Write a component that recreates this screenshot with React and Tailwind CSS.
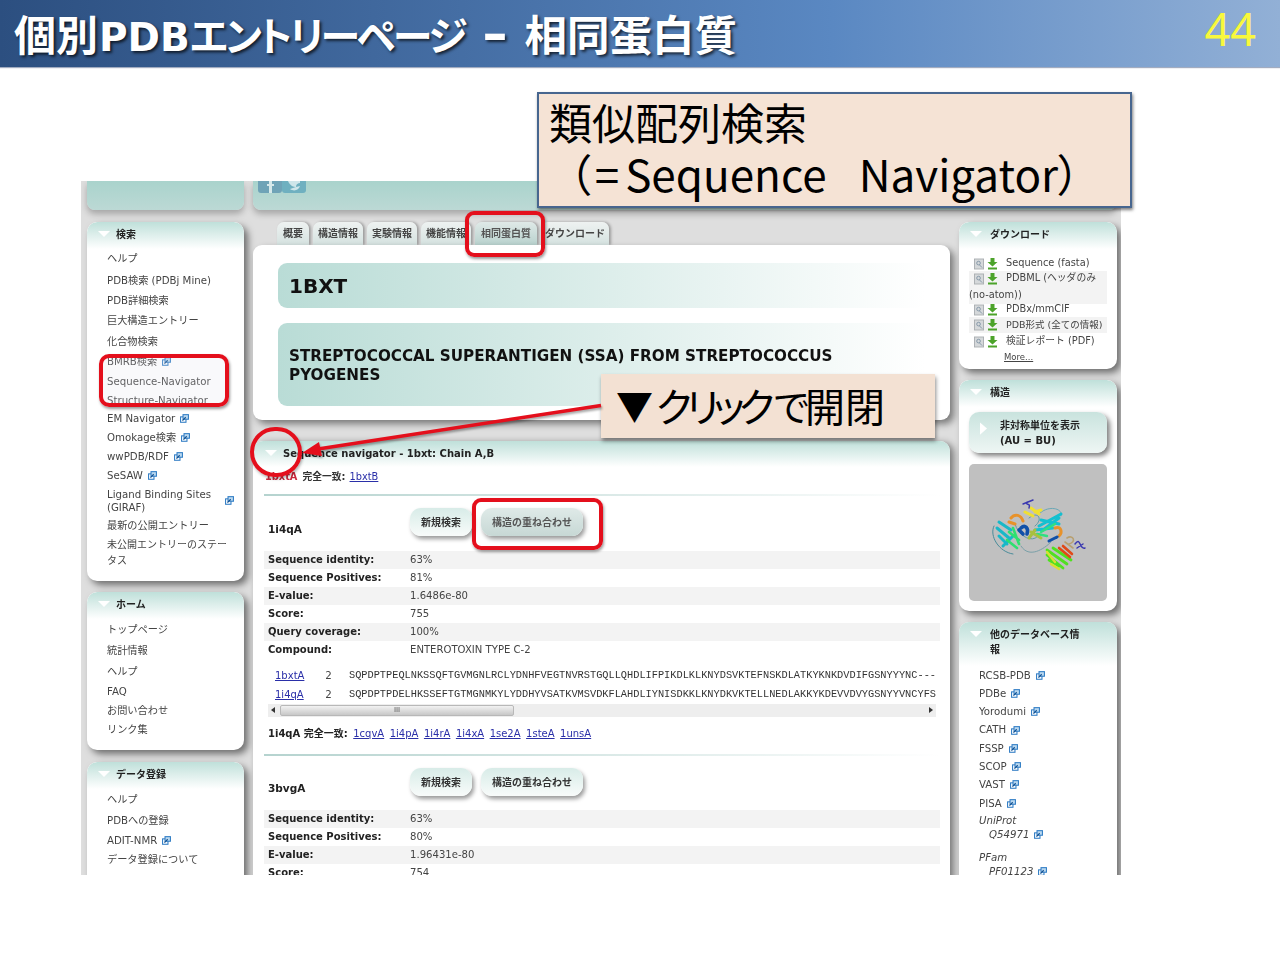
const Ext = () => (
  <svg viewBox="0 0 11 11" className="inline-block w-[9px] h-[9px] ml-[5px] align-[-1px] shrink-0">
    <rect x="0.7" y="3.5" width="6.6" height="6.6" fill="#fff" stroke="#2f7cc4" strokeWidth="1.3" />
    <rect x="3.7" y="0.8" width="6.6" height="5.6" fill="#bcd9f0" stroke="#2f7cc4" strokeWidth="1.3" />
    <path d="M3 8 L7 4" stroke="#12508f" strokeWidth="1.4" />
  </svg>
);
const Tri = ({ c = "" }) => (
  <svg viewBox="0 0 12 6" className={"w-[12px] h-[6px] shrink-0 " + c}>
    <path d="M0 0 H12 L6 6 Z" fill="#fff" />
  </svg>
);
const DL = () => (
  <span className="inline-flex items-center gap-[3px] shrink-0">
    <svg viewBox="0 0 11 12" className="w-[10px] h-[12px]">
      <rect x="0.5" y="0.5" width="10" height="11" fill="#d5d8da" stroke="#a9adb0" />
      <circle cx="5" cy="5" r="2" fill="none" stroke="#7f93a5" />
      <path d="M6 7 L9 10" stroke="#7f93a5" />
    </svg>
    <svg viewBox="0 0 11 12" className="w-[11px] h-[12px]">
      <path d="M3.5 0 H7.5 V4 H10.5 L5.5 8.5 L0.5 4 H3.5 Z" fill="#4ca32a" />
      <rect x="1" y="9.5" width="9" height="2" fill="#4ca32a" />
    </svg>
  </span>
);

const Panel = ({ title, children, cls = "", gap = "gap-[6px]" }) => (
  <div className={"bg-white rounded-[10px] shadow-[4px_4px_7px_rgba(0,0,0,0.5)] overflow-hidden shrink-0 " + cls}>
    <div className={"h-[27px] pb-[3px] rounded-t-[10px] bg-gradient-to-b from-[#bfe0da] to-white flex items-center pl-[11px] " + gap}>
      <Tri />
      <span className="font-bold text-[10px] text-[#222]">{title}</span>
    </div>
    {children}
  </div>
);

const Row = ({ h, children, ext }) => (
  <div className={"flex items-center pl-[20px] pr-[10px] text-[10.2px] text-[#444] " + h}>
    <span>{children}{ext && <Ext />}</span>
  </div>
);

const search = [
  ["h-[21px] pb-[1px]", "ヘルプ"],
  ["h-[21px]", "PDB検索 (PDBj Mine)"],
  ["h-[20px]", "PDB詳細検索"],
  ["h-[20px]", "巨大構造エントリー"],
  ["h-[21px]", "化合物検索"],
  ["h-[20px]", "BMRB検索", 1],
  ["h-[20px]", "Sequence-Navigator"],
  ["h-[18px]", "Structure-Navigator"],
  ["h-[18px]", "EM Navigator", 1],
  ["h-[19px]", "Omokage検索", 1],
  ["h-[19px]", "wwPDB/RDF", 1],
  ["h-[19px]", "SeSAW", 1],
];
const home = [
  ["h-[22px]", "トップページ"],
  ["h-[20px]", "統計情報"],
  ["h-[21px]", "ヘルプ"],
  ["h-[19px]", "FAQ"],
  ["h-[19px]", "お問い合わせ"],
  ["h-[20px]", "リンク集"],
];
const dep = [
  ["h-[21px]", "ヘルプ"],
  ["h-[21px]", "PDBへの登録"],
  ["h-[19px]", "ADIT-NMR", 1],
  ["h-[19px]", "データ登録について"],
];
const dbs = ["RCSB-PDB", "PDBe", "Yorodumi", "CATH", "FSSP", "SCOP", "VAST", "PISA"];

const Tab = ({ w, children, active }) => (
  <div className={"h-[23px] rounded-t-[7px] flex items-center justify-center text-[10px] font-bold shrink-0 shadow-[2px_0_3px_rgba(0,0,0,0.3)] " + w + " " + (active ? "bg-gradient-to-b from-[#dfe9e7] to-[#b9d2ce] text-[#555]" : "bg-gradient-to-b from-[#eef2f1] to-[#d5e2e0] text-[#444]")}>
    {children}
  </div>
);

const Btn = ({ w, children, active }) => (
  <div className={"h-[28px] rounded-[11px] flex items-center justify-center text-[10px] font-bold shadow-[2px_3px_4px_rgba(0,0,0,0.4)] bg-gradient-to-b " + w + " " + (active ? "from-[#dfeae8] to-[#c7d8d5] text-[#555]" : "from-[#d8ece8] to-[#f8fbfa] text-[#333]")}>
    {children}
  </div>
);

const Divider = ({ cls = "" }) => (
  <div className={"h-[2px] bg-gradient-to-r from-[#b5d3cf] to-white " + cls} />
);

const Stat = ({ k, v, shade }) => (
  <div className={"h-[18px] flex items-center pl-[4px] text-[10px] " + (shade ? "bg-[#f3f3f3]" : "")}>
    <span className="w-[142px] font-bold text-[#222] shrink-0">{k}</span>
    <span className="text-[#444] text-[10.1px]">{v}</span>
  </div>
);

const Lnk = ({ children }) => <span className="text-[#2a2fa8] underline">{children}</span>;

const Hit = ({ name, active, mt, nameMt }) => (
  <div className={"flex items-center pl-[4px] " + mt}>
    <span className={"w-[142px] font-bold text-[10.5px] text-[#222] " + nameMt}>{name}</span>
    <div className="flex gap-[9px]">
      <Btn w="w-[62px]">新規検索</Btn>
      <Btn w="w-[102px]" active={active}>構造の重ね合わせ</Btn>
    </div>
  </div>
);

const Protein = () => (
  <svg viewBox="0 0 138 137" className="w-full h-full">
    <g fill="none" strokeLinecap="round" strokeLinejoin="round">
      <path d="M25 62 C20 72 30 88 44 90" stroke="#4a8c9a" strokeWidth="1" />
      <path d="M52 82 C60 95 75 85 82 78" stroke="#7aa0a8" strokeWidth="1" />
      <path d="M70 50 C80 40 95 45 92 52" stroke="#6aa7b5" strokeWidth="1" />
      <path d="M46 60 C50 74 66 80 70 70 M60 54 C70 46 74 56 66 62" stroke="#5f9aa8" strokeWidth="1" />
      <path d="M30 58 L42 66 M28 64 L40 74 M30 72 L38 80 M34 82 L44 72" stroke="#18b8c8" strokeWidth="3" />
      <path d="M40 68 L50 76 M44 64 L50 80 M38 76 L48 84" stroke="#2ee070" strokeWidth="2.6" />
      <path d="M70 62 L92 50 M72 56 L90 60 M66 66 L84 64 M74 66 L90 54" stroke="#14c0d0" strokeWidth="3" />
      <path d="M72 68 L86 60 M68 70 L78 72" stroke="#30e080" strokeWidth="2.4" />
      <path d="M42 54 C46 49 52 51 54 57 M40 58 L46 60" stroke="#e8922a" strokeWidth="3" />
      <path d="M86 64 C92 62 94 68 90 72" stroke="#e8922a" strokeWidth="3" />
      <path d="M56 48 L64 52 M62 44 L70 50 M66 48 L72 46" stroke="#f0e030" strokeWidth="3" />
      <path d="M52 64 C56 60 60 64 58 70 M50 66 L54 70" stroke="#1050a8" strokeWidth="3.6" />
      <path d="M62 68 L72 74 M60 74 L66 66" stroke="#a8c040" strokeWidth="3" />
      <path d="M58 38 C56 42 62 38 60 44 M54 40 L64 36" stroke="#3a38b0" strokeWidth="1.5" />
      <path d="M80 77 L88 73" stroke="#1050a8" strokeWidth="3" />
      <path d="M78 86 L98 100 M78 91 L94 104 M84 84 L102 96 M80 96 L90 102" stroke="#50e020" strokeWidth="2.8" />
      <path d="M90 84 L101 93 M94 82 L103 90" stroke="#e04a18" strokeWidth="2.6" />
      <path d="M78 88 L86 98 M82 100 L90 105" stroke="#d8e030" strokeWidth="2.4" />
      <path d="M98 74 C104 70 108 78 100 80 M96 78 L104 84" stroke="#b8a070" strokeWidth="1.6" />
      <path d="M106 80 C112 72 110 86 116 84 M108 84 L114 80" stroke="#3a38b0" strokeWidth="1.5" />
    </g>
  </svg>
);

export default function App() {
  return (
    <div className="relative w-[1280px] h-[960px] bg-white overflow-hidden [font-family:'DejaVu_Sans','Noto_Sans_CJK_JP',sans-serif]">
      <header className="h-[67px] bg-gradient-to-r from-[#2c4f80] via-[#5a88c2] via-65% to-[#92b0d6] flex items-center justify-between pl-[14px] pr-[24px] shadow-[0_1px_1px_rgba(70,90,130,0.5)] [font-family:'Noto_Sans_CJK_JP',sans-serif]">
        <h1 className="text-[42px] font-bold text-white leading-none whitespace-pre [text-shadow:2px_2px_3px_rgba(0,0,0,0.7)]">
          <span>個別</span>
          <span className="text-[39px] ml-[1px] [font-family:'DejaVu_Sans',sans-serif]">PDB</span>
          <span className="text-[40px] [font-feature-settings:'palt'] tracking-[-2.9px]">エントリーページ</span>
          <span className="text-[50px] ml-[18px] mr-[17px] [font-family:'DejaVu_Sans',sans-serif] leading-none">–</span>
          <span className="text-[42.5px]">相同蛋白質</span>
        </h1>
        <span className="text-[45px] -mt-[10px] text-[#f8f83c] leading-none [font-family:'Noto_Sans',sans-serif] font-normal">44</span>
      </header>

      <main className="ml-[81px] mt-[114px] w-[1040px] h-[694px] overflow-hidden bg-[#dedede] flex px-[6px] gap-[9px] blur-[0.35px]">
        {/* left */}
        <div className="w-[157px] shrink-0 flex flex-col">
          <div className="h-[29px] shrink-0 rounded-b-[8px] bg-gradient-to-b from-[#a9d3cc] to-[#bcd9d5] shadow-[0_4px_6px_rgba(0,0,0,0.25)]" />
          <Panel title="検索" cls="mt-[12px] pb-[10px]">
            {search.map(([h, t, e], i) => <Row key={i} h={h} ext={e}>{t}</Row>)}
            <div className="h-[31px] flex items-center justify-between pl-[20px] pr-[10px] text-[10.2px] leading-[13px] text-[#444]">
              <span>Ligand Binding Sites<br />(GIRAF)</span><Ext />
            </div>
            <Row h="h-[19px]">最新の公開エントリー</Row>
            <div className="h-[36px] flex items-center pl-[20px] text-[10px] leading-[16px] text-[#444]">
              <span>未公開エントリーのステー<br />タス</span>
            </div>
          </Panel>
          <Panel title="ホーム" cls="mt-[11px] pb-[10px]">
            {home.map(([h, t], i) => <Row key={i} h={h}>{t}</Row>)}
          </Panel>
          <Panel title="データ登録" cls="mt-[12px] pb-[20px]">
            {dep.map(([h, t, e], i) => <Row key={i} h={h} ext={e}>{t}</Row>)}
          </Panel>
        </div>

        {/* center */}
        <div className="w-[697px] shrink-0 flex flex-col">
          <div className="h-[29px] shrink-0 w-[864px] rounded-b-[8px] bg-gradient-to-b from-[#a9d3cc] to-[#bcd9d5] shadow-[0_4px_6px_rgba(0,0,0,0.25)] flex items-start pl-[5px]">
            <svg viewBox="0 0 24 12" className="w-[24px] h-[12px]">
              <path d="M0 0 H24 V9 Q24 12 21 12 H3 Q0 12 0 9 Z" fill="#6fa3b7" />
              <path d="M11 12 V5 H9 V3 H11 V0 H14 V3 H16 V5 H14 V12 Z" fill="#d6e8ea" />
            </svg>
            <svg viewBox="0 0 24 12" className="w-[24px] h-[12px]">
              <path d="M0 0 H24 V9 Q24 12 21 12 H3 Q0 12 0 9 Z" fill="#6fb0c0" />
              <path d="M6 0 C8 5 12 6 14 6 C14 3 16 2 18 2 V0 Z M8 8 C12 11 17 9 18 5 L14 6 Z" fill="#cfe6ea" />
            </svg>
          </div>
          <div className="mt-[12px] flex pl-[24px] gap-[4px] shrink-0">
            <Tab w="w-[32px]">概要</Tab>
            <Tab w="w-[50px]">構造情報</Tab>
            <Tab w="w-[50px]">実験情報</Tab>
            <Tab w="w-[50px]">機能情報</Tab>
            <Tab w="w-[62px]" active>相同蛋白質</Tab>
            <Tab w="w-[68px]">ダウンロード</Tab>
          </div>
          <div className="h-[175px] shrink-0 bg-white rounded-[9px] shadow-[4px_4px_7px_rgba(0,0,0,0.45)] pt-[18px] px-[25px] flex flex-col">
            <div className="h-[45px] rounded-[9px] bg-gradient-to-r from-[#b9dcd6] to-white flex items-center pl-[11px] text-[20px] font-bold text-[#111] leading-none">1BXT</div>
            <div className="mt-[15px] h-[83px] rounded-[9px] bg-gradient-to-r from-[#b9dcd6] to-white flex items-center pl-[11px] pt-[2px] text-[15.2px] font-bold text-[#111] leading-[19px]">
              <span>STREPTOCOCCAL SUPERANTIGEN (SSA) FROM STREPTOCOCCUS<br />PYOGENES</span>
            </div>
          </div>
          <div className="mt-[21px] h-[500px] shrink-0 bg-white rounded-t-[10px] shadow-[4px_2px_7px_rgba(0,0,0,0.45)] overflow-hidden">
            <div className="h-[26px] pb-[2px] bg-gradient-to-b from-[#bfe0da] to-white flex items-center pl-[12px] gap-[6px]">
              <Tri />
              <span className="font-bold text-[10px] text-[#222]">Sequence navigator - 1bxt: Chain A,B</span>
            </div>
            <div className="pl-[12px] pt-[3px] h-[18px] flex items-center text-[9.8px]">
              <span className="font-bold text-[#c8283c]">1bxtA</span>
              <span className="font-bold text-[#333] ml-[5px]">完全一致:</span>
              <span className="ml-[4px]"><Lnk>1bxtB</Lnk></span>
            </div>
            <div className="pl-[11px] pr-[10px]">
              <Divider cls="mt-[9px]" />
              <Hit name="1i4qA" active mt="mt-[11px]" nameMt="mt-[15px]" />
              <div className="mt-[13px]">
                <Stat shade k="Sequence identity:" v="63%" />
                <Stat k="Sequence Positives:" v="81%" />
                <Stat shade k="E-value:" v="1.6486e-80" />
                <Stat k="Score:" v="755" />
                <Stat shade k="Query coverage:" v="100%" />
                <Stat k="Compound:" v="ENTEROTOXIN TYPE C-2" />
              </div>
              <div className="mt-[7px] flex flex-col pl-[11px] text-[10.3px] w-[672px] overflow-hidden">
                <div className="h-[19px] flex items-center whitespace-pre">
                  <span className="w-[51px] text-[10px]"><Lnk>1bxtA</Lnk></span>
                  <span className="w-[24px] text-[#444]">2</span>
                  <span className="[font-family:'Liberation_Mono',monospace] text-[#333]">SQPDPTPEQLNKSSQFTGVMGNLRCLYDNHFVEGTNVRSTGQLLQHDLIFPIKDLKLKNYDSVKTEFNSKDLATKYKNKDVDIFGSNYYYNC---</span>
                </div>
                <div className="h-[19px] flex items-center whitespace-pre">
                  <span className="w-[51px] text-[10px]"><Lnk>1i4qA</Lnk></span>
                  <span className="w-[24px] text-[#444]">2</span>
                  <span className="[font-family:'Liberation_Mono',monospace] text-[#333]">SQPDPTPDELHKSSEFTGTMGNMKYLYDDHYVSATKVMSVDKFLAHDLIYNISDKKLKNYDKVKTELLNEDLAKKYKDEVVDVYGSNYYVNCYFS</span>
                </div>
              </div>
              <div className="ml-[4px] w-[668px] h-[13px] bg-[#eeeeee] flex items-center justify-between px-[3px]">
                <div className="flex items-center gap-[5px] h-full">
                  <svg viewBox="0 0 4 6" className="w-[4px] h-[6px]"><path d="M4 0 V6 L0 3 Z" fill="#333" /></svg>
                  <div className="w-[234px] h-[11px] rounded-[2px] bg-gradient-to-b from-[#f2f2f2] to-[#c8c8c8] border border-[#b8b8b8] flex items-center justify-center text-[7px] text-[#555] leading-none">III</div>
                </div>
                <svg viewBox="0 0 4 6" className="w-[4px] h-[6px]"><path d="M0 0 V6 L4 3 Z" fill="#333" /></svg>
              </div>
              <div className="pl-[4px] mt-[10px] h-[14px] flex items-center text-[10px] gap-[5.5px]">
                <span className="font-bold text-[#222]">1i4qA 完全一致:</span>
                <Lnk>1cqvA</Lnk><Lnk>1i4pA</Lnk><Lnk>1i4rA</Lnk><Lnk>1i4xA</Lnk><Lnk>1se2A</Lnk><Lnk>1steA</Lnk><Lnk>1unsA</Lnk>
              </div>
              <Divider cls="mt-[13px]" />
              <Hit name="3bvgA" mt="mt-[12px]" nameMt="mt-[13px]" />
              <div className="mt-[13px]">
                <Stat shade k="Sequence identity:" v="63%" />
                <Stat k="Sequence Positives:" v="80%" />
                <Stat shade k="E-value:" v="1.96431e-80" />
                <Stat k="Score:" v="754" />
              </div>
            </div>
          </div>
        </div>

        {/* right */}
        <div className="w-[158px] shrink-0 flex flex-col">
          <div className="h-[29px] shrink-0" />
          <Panel title="ダウンロード" cls="mt-[12px] h-[147px]" gap="gap-[8px]">
            <div className="mt-[7px] px-[10px] text-[9.8px] text-[#444] whitespace-nowrap">
              <div className="h-[15px] flex items-center pl-[5px] gap-[8px]"><DL />Sequence (fasta)</div>
              <div className="bg-[#f3f3f3] h-[33px]">
                <div className="h-[15px] flex items-center pl-[5px] gap-[8px]"><DL />PDBML (ヘッダのみ</div>
                <div className="h-[18px] flex items-center">(no-atom))</div>
              </div>
              <div className="h-[15px] flex items-center pl-[5px] gap-[8px] -mt-[2px]"><DL />PDBx/mmCIF</div>
              <div className="h-[16px] flex items-center pl-[5px] gap-[8px] bg-[#f3f3f3]"><DL /><span className="text-[9.5px]">PDB形式 (全ての情報)</span></div>
              <div className="h-[17px] flex items-center pl-[5px] gap-[8px]"><DL />検証レポート (PDF)</div>
              <div className="pl-[35px] text-[8.5px] underline leading-[14px]">More...</div>
            </div>
          </Panel>
          <Panel title="構造" cls="mt-[11px] h-[231px]" gap="gap-[8px]">
            <div className="px-[10px] pt-[5px]">
              <div className="h-[41px] rounded-[10px] bg-gradient-to-b from-[#c9e3de] to-[#eef6f4] shadow-[3px_3px_5px_rgba(0,0,0,0.5)] flex items-center pl-[11px] gap-[13px]">
                <svg viewBox="0 0 8 14" className="w-[7px] h-[13px] shrink-0 -mt-[8px]"><path d="M0 0 V14 L8 7 Z" fill="#fff" /></svg>
                <span className="font-bold text-[10px] leading-[15px] text-[#222]">非対称単位を表示<br />(AU = BU)</span>
              </div>
              <div className="mt-[11px] h-[137px] rounded-[5px] bg-[#c0c0c0] overflow-hidden"><Protein /></div>
            </div>
          </Panel>
          <div className="mt-[11px] pb-[20px] bg-white rounded-[10px] shadow-[4px_4px_7px_rgba(0,0,0,0.5)] overflow-hidden shrink-0">
            <div className="h-[44px] bg-gradient-to-b from-[#bfe0da] to-white flex pl-[11px] pt-[5px] gap-[8px]">
              <Tri c="mt-[4px]" />
              <span className="font-bold text-[10px] leading-[15px] text-[#222]">他のデータベース情<br />報</span>
            </div>
            <div className="pl-[20px] text-[10.2px] text-[#444]">
              {dbs.map((d) => <div key={d} className="h-[18.3px] flex items-center">{d}<Ext /></div>)}
              <div className="italic leading-[14px] mt-[2px]">UniProt</div>
              <div className="italic leading-[14px] pl-[10px]">Q54971<Ext /></div>
              <div className="italic leading-[14px] mt-[9px]">PFam</div>
              <div className="italic leading-[13px] pl-[10px]">PF01123<Ext /></div>
            </div>
          </div>
        </div>
      </main>

      {/* annotations */}
      <div className="absolute left-[537px] top-[92px] w-[595px] h-[116px] bg-[#f5e3d5] border-2 border-[#47668f] shadow-[1px_2px_3px_rgba(0,0,0,0.5)] pl-[10px] pt-[1px] text-black [font-family:'Noto_Sans_CJK_JP',sans-serif] text-[43px] leading-[52px] whitespace-pre">
        <div>類似配列検索</div>
        <div className="text-[44px] [font-feature-settings:'palt']">
          {"  "}（<span className="ml-[4px]">=</span><span className="ml-[6px]">Sequence</span><span className="ml-[32px]">Navigator</span>）
        </div>
      </div>

      <div className="absolute left-[601px] top-[374px] w-[334px] h-[64px] bg-[#f3e1d3] shadow-[1px_3px_4px_rgba(0,0,0,0.45)] pl-[15px] pb-[2px] flex items-center text-black leading-none whitespace-pre [font-family:'Noto_Sans_CJK_JP',sans-serif] [font-feature-settings:'palt']">
        <span className="text-[37px]">▼</span>
        <span className="text-[40px] tracking-[-5.8px] ml-[3px]">クリック</span>
        <span className="text-[38px] ml-[5px] tracking-[-4px]">で</span>
        <span className="text-[40px] ml-[0px] [font-feature-settings:'normal']">開閉</span>
      </div>

      <div className="absolute left-[99px] top-[354px] w-[130px] h-[53px] rounded-[10px] border-[4px] border-[#e40f1c] bg-[#dfe3ea]/20 shadow-[1px_2px_3px_rgba(0,0,0,0.4)]" />
      <div className="absolute left-[465px] top-[211px] w-[80px] h-[46px] rounded-[9px] border-[4px] border-[#e40f1c] shadow-[1px_2px_3px_rgba(0,0,0,0.4)]" />
      <div className="absolute left-[472px] top-[498px] w-[131px] h-[52px] rounded-[9px] border-[4px] border-[#e40f1c] shadow-[1px_2px_3px_rgba(0,0,0,0.4)]" />
      <div className="absolute left-[250px] top-[427px] w-[52px] h-[50px] rounded-full border-[4px] border-[#e40f1c] shadow-[1px_2px_3px_rgba(0,0,0,0.3)]" />
      <svg className="absolute left-[280px] top-[400px] w-[325px] h-[62px] drop-shadow-[1px_2px_1px_rgba(0,0,0,0.35)]" viewBox="0 0 325 62">
        <path d="M321 5.5 L38 49" stroke="#e40f1c" strokeWidth="3.5" fill="none" />
        <path d="M22 53 L39 42 L42 56 Z" fill="#e40f1c" />
      </svg>
    </div>
  );
}
